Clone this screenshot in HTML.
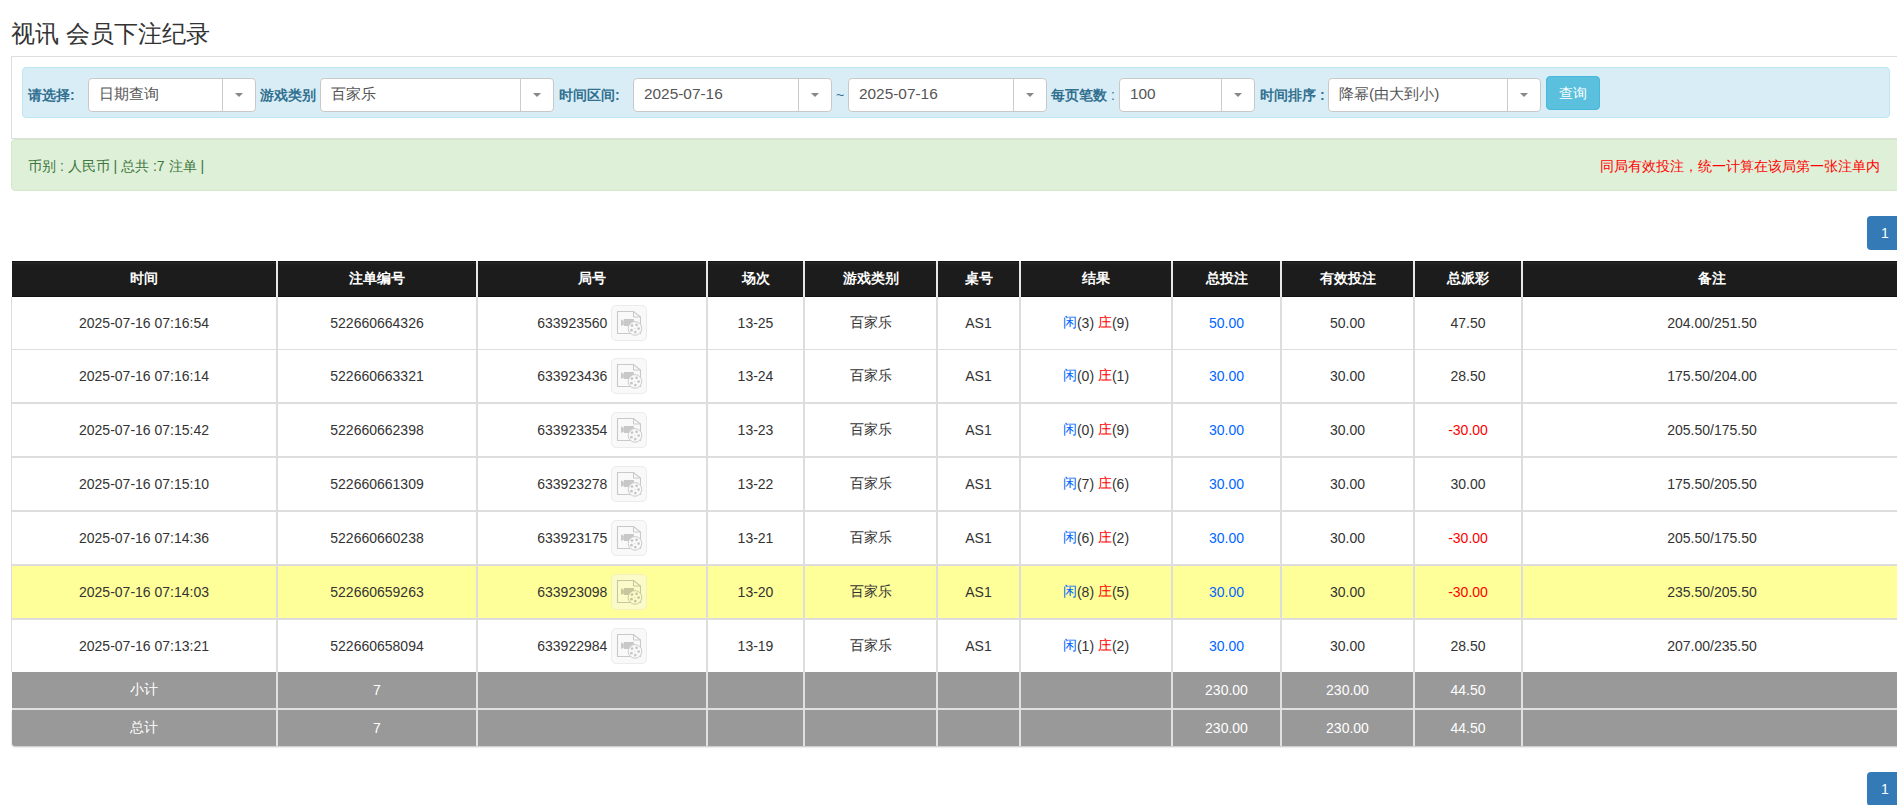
<!DOCTYPE html>
<html><head><meta charset="utf-8"><title>视讯 会员下注纪录</title>
<style>
*{box-sizing:border-box;margin:0;padding:0}
html,body{width:1897px;height:805px;overflow:hidden;background:#fff}
body{position:relative;font-family:"Liberation Sans",sans-serif;color:#333;font-size:14px}
.a{position:absolute}
.title{left:11px;top:16px;font-size:24px;line-height:36px;color:#333;white-space:nowrap}
.panel{left:11px;top:56px;width:1890px;height:83px;border:1px solid #ddd;background:#fff}
.info{left:22px;top:67px;width:1868px;height:51px;background:#d9edf7;border:1px solid #bce8f1;border-radius:4px}
.lbl{top:85px;font-size:14px;font-weight:bold;color:#31708f;line-height:20px;white-space:nowrap}
.sel{top:78px;height:34px;background:#fff;border:1px solid #c8c8c8;border-radius:4px;font-size:15.4px;color:#555;line-height:30px;padding-left:10px;white-space:nowrap}
.sel .dv{position:absolute;top:0;bottom:0;width:1px;background:#ccc}
.sel .ct{position:absolute;top:14px;width:0;height:0;border-left:4px solid transparent;border-right:4px solid transparent;border-top:4px solid #888}
.btn{left:1546px;top:76px;width:54px;height:34px;background:#5bc0de;border:1px solid #46b8da;border-radius:4px;color:#fff;font-size:14px;line-height:32px;text-align:center}
.succ{left:11px;top:139px;width:1890px;height:52px;background:#dff0d8;border:1px solid #d6e9c6;border-radius:4px}
.gtxt{left:28px;top:156px;color:#3c763d;font-size:14px;line-height:20px;white-space:nowrap}
.rtxt{left:1600px;top:155.5px;color:#f00;font-size:14px;line-height:20px;white-space:nowrap}
.pg{left:1867px;width:40px;height:34px;background:#337ab7;border-radius:4px;color:#fff;font-size:14px;line-height:34px;padding-left:14px;font-weight:normal}
.hdr{left:12px;top:261px;width:1889px;height:36px;background:linear-gradient(#141414 0,#141414 1px,#262626 1px,#202020 3px,#1c1c1c 4px,#1c1c1c 35px,#111 35px)}
.c{position:absolute;display:flex;align-items:center;justify-content:center;white-space:nowrap}
.in{display:flex;align-items:center;white-space:pre}
.h{color:#fff;font-weight:bold;font-size:14px}
.vl{position:absolute;width:2px}
.hl{position:absolute;left:12px;width:1889px;background:#ddd}
.yel{background:#ffff99}
.gray{position:absolute;left:12px;width:1889px;height:36px;background:#999}
.gb{border-radius:0 0 3px 3px;box-shadow:0 1px 2px rgba(0,0,0,.25)}
.w{color:#fff}
.bl{color:#0066ff}
.rd{color:#f00}
.vb{display:inline-block;width:36px;height:36px;margin-left:3.4px;top:-0.5px;border:1px solid #ececec;border-radius:5px;background:#f9f9f9;position:relative}
.vb svg{position:absolute;left:-1px;top:-1px}
.yel .vb{background:#fbfbc9;border-color:#f2f2b8}
</style></head><body>
<div class="a title">视讯 会员下注纪录</div>
<div class="a panel"></div>
<div class="a info"></div>

<div class="a lbl" style="left:28px">请选择:</div>
<div class="a sel" style="left:88px;width:168px">日期查询<span class="dv" style="left:133px"></span><span class="ct" style="left:146px"></span></div>
<div class="a sel" style="left:320px;width:234px">百家乐<span class="dv" style="left:199px"></span><span class="ct" style="left:212px"></span></div>
<div class="a sel" style="left:633px;width:199px">2025-07-16<span class="dv" style="left:164px"></span><span class="ct" style="left:177px"></span></div>
<div class="a sel" style="left:848px;width:199px">2025-07-16<span class="dv" style="left:164px"></span><span class="ct" style="left:177px"></span></div>
<div class="a sel" style="left:1119px;width:136px">100<span class="dv" style="left:101px"></span><span class="ct" style="left:114px"></span></div>
<div class="a sel" style="left:1328px;width:213px">降幂(由大到小)<span class="dv" style="left:178px"></span><span class="ct" style="left:191px"></span></div>
<div class="a lbl" style="left:260px">游戏类别</div>
<div class="a lbl" style="left:559px">时间区间:</div>
<div class="a" style="left:836px;top:85px;line-height:20px;color:#31708f;font-size:14px">~</div>
<div class="a lbl" style="left:1051px">每页笔数 <span style="font-weight:normal">:</span></div>
<div class="a lbl" style="left:1260px">时间排序 :</div>
<div class="a btn">查询</div>
<div class="a succ"></div>
<div class="a gtxt">币别 : 人民币 | 总共 :7 注单 |</div>
<div class="a rtxt">同局有效投注，统一计算在该局第一张注单内</div>
<div class="a pg" style="top:216px">1</div>
<div class="a pg" style="top:772px">1</div>
<div class="a hdr"></div>
<div class="c h" style="left:12px;top:261px;width:264px;height:36px;"><span class="in">时间</span></div>
<div class="c h" style="left:278px;top:261px;width:198px;height:36px;"><span class="in">注单编号</span></div>
<div class="c h" style="left:478px;top:261px;width:228px;height:36px;"><span class="in">局号</span></div>
<div class="c h" style="left:708px;top:261px;width:95px;height:36px;"><span class="in">场次</span></div>
<div class="c h" style="left:805px;top:261px;width:131px;height:36px;"><span class="in">游戏类别</span></div>
<div class="c h" style="left:938px;top:261px;width:81px;height:36px;"><span class="in">桌号</span></div>
<div class="c h" style="left:1021px;top:261px;width:150px;height:36px;"><span class="in">结果</span></div>
<div class="c h" style="left:1173px;top:261px;width:107px;height:36px;"><span class="in">总投注</span></div>
<div class="c h" style="left:1282px;top:261px;width:131px;height:36px;"><span class="in">有效投注</span></div>
<div class="c h" style="left:1415px;top:261px;width:106px;height:36px;"><span class="in">总派彩</span></div>
<div class="c h" style="left:1523px;top:261px;width:378px;height:36px;"><span class="in">备注</span></div>
<div class="a" style="left:11px;top:297px;width:1px;height:375px;background:#ddd"></div>
<div class="c" style="left:12px;top:297px;width:264px;height:52px;"><span class="in">2025-07-16 07:16:54</span></div>
<div class="c" style="left:278px;top:297px;width:198px;height:52px;"><span class="in">522660664326</span></div>
<div class="c" style="left:478px;top:297px;width:228px;height:52px;"><span class="in">633923560<span class="vb"><svg width="36" height="36" viewBox="0 0 36 36"><path d="M6.5 6.5H22.5L29.5 12V28.5H6.5Z" fill="none" stroke="#c9c9c9" stroke-width="1.1"/><path d="M22.5 6.5V12H29.5" fill="none" stroke="#c9c9c9" stroke-width="1"/><path d="M10 14.3L12.8 16V19.5L10 21Z" fill="#c8c8c8"/><rect x="12.8" y="14" width="10.1" height="7" fill="#c8c8c8"/><circle cx="24" cy="23.4" r="6.8" fill="#f9f9f9" stroke="#cccccc" stroke-width="1"/><circle cx="21" cy="20.6" r="1.35" fill="#c6c6c6"/><circle cx="25.6" cy="19.8" r="1.35" fill="#c6c6c6"/><circle cx="27.6" cy="23.6" r="1.35" fill="#c6c6c6"/><circle cx="24.3" cy="27.1" r="1.35" fill="#c6c6c6"/><circle cx="20.5" cy="25.2" r="1.35" fill="#c6c6c6"/><circle cx="23.9" cy="23.5" r="0.5" fill="#c8c8c8"/></svg></span></span></div>
<div class="c" style="left:708px;top:297px;width:95px;height:52px;"><span class="in">13-25</span></div>
<div class="c" style="left:805px;top:297px;width:131px;height:52px;"><span class="in">百家乐</span></div>
<div class="c" style="left:938px;top:297px;width:81px;height:52px;"><span class="in">AS1</span></div>
<div class="c" style="left:1021px;top:297px;width:150px;height:52px;"><span class="in"><span class="bl">闲</span>(3) <span class="rd">庄</span>(9)</span></div>
<div class="c" style="left:1173px;top:297px;width:107px;height:52px;"><span class="in"><span class="bl">50.00</span></span></div>
<div class="c" style="left:1282px;top:297px;width:131px;height:52px;"><span class="in">50.00</span></div>
<div class="c" style="left:1415px;top:297px;width:106px;height:52px;"><span class="in"><span class="">47.50</span></span></div>
<div class="c" style="left:1523px;top:297px;width:378px;height:52px;"><span class="in">204.00/251.50</span></div>
<div class="c" style="left:12px;top:350px;width:264px;height:52px;"><span class="in">2025-07-16 07:16:14</span></div>
<div class="c" style="left:278px;top:350px;width:198px;height:52px;"><span class="in">522660663321</span></div>
<div class="c" style="left:478px;top:350px;width:228px;height:52px;"><span class="in">633923436<span class="vb"><svg width="36" height="36" viewBox="0 0 36 36"><path d="M6.5 6.5H22.5L29.5 12V28.5H6.5Z" fill="none" stroke="#c9c9c9" stroke-width="1.1"/><path d="M22.5 6.5V12H29.5" fill="none" stroke="#c9c9c9" stroke-width="1"/><path d="M10 14.3L12.8 16V19.5L10 21Z" fill="#c8c8c8"/><rect x="12.8" y="14" width="10.1" height="7" fill="#c8c8c8"/><circle cx="24" cy="23.4" r="6.8" fill="#f9f9f9" stroke="#cccccc" stroke-width="1"/><circle cx="21" cy="20.6" r="1.35" fill="#c6c6c6"/><circle cx="25.6" cy="19.8" r="1.35" fill="#c6c6c6"/><circle cx="27.6" cy="23.6" r="1.35" fill="#c6c6c6"/><circle cx="24.3" cy="27.1" r="1.35" fill="#c6c6c6"/><circle cx="20.5" cy="25.2" r="1.35" fill="#c6c6c6"/><circle cx="23.9" cy="23.5" r="0.5" fill="#c8c8c8"/></svg></span></span></div>
<div class="c" style="left:708px;top:350px;width:95px;height:52px;"><span class="in">13-24</span></div>
<div class="c" style="left:805px;top:350px;width:131px;height:52px;"><span class="in">百家乐</span></div>
<div class="c" style="left:938px;top:350px;width:81px;height:52px;"><span class="in">AS1</span></div>
<div class="c" style="left:1021px;top:350px;width:150px;height:52px;"><span class="in"><span class="bl">闲</span>(0) <span class="rd">庄</span>(1)</span></div>
<div class="c" style="left:1173px;top:350px;width:107px;height:52px;"><span class="in"><span class="bl">30.00</span></span></div>
<div class="c" style="left:1282px;top:350px;width:131px;height:52px;"><span class="in">30.00</span></div>
<div class="c" style="left:1415px;top:350px;width:106px;height:52px;"><span class="in"><span class="">28.50</span></span></div>
<div class="c" style="left:1523px;top:350px;width:378px;height:52px;"><span class="in">175.50/204.00</span></div>
<div class="c" style="left:12px;top:404px;width:264px;height:52px;"><span class="in">2025-07-16 07:15:42</span></div>
<div class="c" style="left:278px;top:404px;width:198px;height:52px;"><span class="in">522660662398</span></div>
<div class="c" style="left:478px;top:404px;width:228px;height:52px;"><span class="in">633923354<span class="vb"><svg width="36" height="36" viewBox="0 0 36 36"><path d="M6.5 6.5H22.5L29.5 12V28.5H6.5Z" fill="none" stroke="#c9c9c9" stroke-width="1.1"/><path d="M22.5 6.5V12H29.5" fill="none" stroke="#c9c9c9" stroke-width="1"/><path d="M10 14.3L12.8 16V19.5L10 21Z" fill="#c8c8c8"/><rect x="12.8" y="14" width="10.1" height="7" fill="#c8c8c8"/><circle cx="24" cy="23.4" r="6.8" fill="#f9f9f9" stroke="#cccccc" stroke-width="1"/><circle cx="21" cy="20.6" r="1.35" fill="#c6c6c6"/><circle cx="25.6" cy="19.8" r="1.35" fill="#c6c6c6"/><circle cx="27.6" cy="23.6" r="1.35" fill="#c6c6c6"/><circle cx="24.3" cy="27.1" r="1.35" fill="#c6c6c6"/><circle cx="20.5" cy="25.2" r="1.35" fill="#c6c6c6"/><circle cx="23.9" cy="23.5" r="0.5" fill="#c8c8c8"/></svg></span></span></div>
<div class="c" style="left:708px;top:404px;width:95px;height:52px;"><span class="in">13-23</span></div>
<div class="c" style="left:805px;top:404px;width:131px;height:52px;"><span class="in">百家乐</span></div>
<div class="c" style="left:938px;top:404px;width:81px;height:52px;"><span class="in">AS1</span></div>
<div class="c" style="left:1021px;top:404px;width:150px;height:52px;"><span class="in"><span class="bl">闲</span>(0) <span class="rd">庄</span>(9)</span></div>
<div class="c" style="left:1173px;top:404px;width:107px;height:52px;"><span class="in"><span class="bl">30.00</span></span></div>
<div class="c" style="left:1282px;top:404px;width:131px;height:52px;"><span class="in">30.00</span></div>
<div class="c" style="left:1415px;top:404px;width:106px;height:52px;"><span class="in"><span class="rd">-30.00</span></span></div>
<div class="c" style="left:1523px;top:404px;width:378px;height:52px;"><span class="in">205.50/175.50</span></div>
<div class="c" style="left:12px;top:458px;width:264px;height:52px;"><span class="in">2025-07-16 07:15:10</span></div>
<div class="c" style="left:278px;top:458px;width:198px;height:52px;"><span class="in">522660661309</span></div>
<div class="c" style="left:478px;top:458px;width:228px;height:52px;"><span class="in">633923278<span class="vb"><svg width="36" height="36" viewBox="0 0 36 36"><path d="M6.5 6.5H22.5L29.5 12V28.5H6.5Z" fill="none" stroke="#c9c9c9" stroke-width="1.1"/><path d="M22.5 6.5V12H29.5" fill="none" stroke="#c9c9c9" stroke-width="1"/><path d="M10 14.3L12.8 16V19.5L10 21Z" fill="#c8c8c8"/><rect x="12.8" y="14" width="10.1" height="7" fill="#c8c8c8"/><circle cx="24" cy="23.4" r="6.8" fill="#f9f9f9" stroke="#cccccc" stroke-width="1"/><circle cx="21" cy="20.6" r="1.35" fill="#c6c6c6"/><circle cx="25.6" cy="19.8" r="1.35" fill="#c6c6c6"/><circle cx="27.6" cy="23.6" r="1.35" fill="#c6c6c6"/><circle cx="24.3" cy="27.1" r="1.35" fill="#c6c6c6"/><circle cx="20.5" cy="25.2" r="1.35" fill="#c6c6c6"/><circle cx="23.9" cy="23.5" r="0.5" fill="#c8c8c8"/></svg></span></span></div>
<div class="c" style="left:708px;top:458px;width:95px;height:52px;"><span class="in">13-22</span></div>
<div class="c" style="left:805px;top:458px;width:131px;height:52px;"><span class="in">百家乐</span></div>
<div class="c" style="left:938px;top:458px;width:81px;height:52px;"><span class="in">AS1</span></div>
<div class="c" style="left:1021px;top:458px;width:150px;height:52px;"><span class="in"><span class="bl">闲</span>(7) <span class="rd">庄</span>(6)</span></div>
<div class="c" style="left:1173px;top:458px;width:107px;height:52px;"><span class="in"><span class="bl">30.00</span></span></div>
<div class="c" style="left:1282px;top:458px;width:131px;height:52px;"><span class="in">30.00</span></div>
<div class="c" style="left:1415px;top:458px;width:106px;height:52px;"><span class="in"><span class="">30.00</span></span></div>
<div class="c" style="left:1523px;top:458px;width:378px;height:52px;"><span class="in">175.50/205.50</span></div>
<div class="c" style="left:12px;top:512px;width:264px;height:52px;"><span class="in">2025-07-16 07:14:36</span></div>
<div class="c" style="left:278px;top:512px;width:198px;height:52px;"><span class="in">522660660238</span></div>
<div class="c" style="left:478px;top:512px;width:228px;height:52px;"><span class="in">633923175<span class="vb"><svg width="36" height="36" viewBox="0 0 36 36"><path d="M6.5 6.5H22.5L29.5 12V28.5H6.5Z" fill="none" stroke="#c9c9c9" stroke-width="1.1"/><path d="M22.5 6.5V12H29.5" fill="none" stroke="#c9c9c9" stroke-width="1"/><path d="M10 14.3L12.8 16V19.5L10 21Z" fill="#c8c8c8"/><rect x="12.8" y="14" width="10.1" height="7" fill="#c8c8c8"/><circle cx="24" cy="23.4" r="6.8" fill="#f9f9f9" stroke="#cccccc" stroke-width="1"/><circle cx="21" cy="20.6" r="1.35" fill="#c6c6c6"/><circle cx="25.6" cy="19.8" r="1.35" fill="#c6c6c6"/><circle cx="27.6" cy="23.6" r="1.35" fill="#c6c6c6"/><circle cx="24.3" cy="27.1" r="1.35" fill="#c6c6c6"/><circle cx="20.5" cy="25.2" r="1.35" fill="#c6c6c6"/><circle cx="23.9" cy="23.5" r="0.5" fill="#c8c8c8"/></svg></span></span></div>
<div class="c" style="left:708px;top:512px;width:95px;height:52px;"><span class="in">13-21</span></div>
<div class="c" style="left:805px;top:512px;width:131px;height:52px;"><span class="in">百家乐</span></div>
<div class="c" style="left:938px;top:512px;width:81px;height:52px;"><span class="in">AS1</span></div>
<div class="c" style="left:1021px;top:512px;width:150px;height:52px;"><span class="in"><span class="bl">闲</span>(6) <span class="rd">庄</span>(2)</span></div>
<div class="c" style="left:1173px;top:512px;width:107px;height:52px;"><span class="in"><span class="bl">30.00</span></span></div>
<div class="c" style="left:1282px;top:512px;width:131px;height:52px;"><span class="in">30.00</span></div>
<div class="c" style="left:1415px;top:512px;width:106px;height:52px;"><span class="in"><span class="rd">-30.00</span></span></div>
<div class="c" style="left:1523px;top:512px;width:378px;height:52px;"><span class="in">205.50/175.50</span></div>
<div class="a yel" style="left:12px;top:566px;width:1889px;height:52px"></div>
<div class="c yel" style="left:12px;top:566px;width:264px;height:52px;"><span class="in">2025-07-16 07:14:03</span></div>
<div class="c yel" style="left:278px;top:566px;width:198px;height:52px;"><span class="in">522660659263</span></div>
<div class="c yel" style="left:478px;top:566px;width:228px;height:52px;"><span class="in">633923098<span class="vb"><svg width="36" height="36" viewBox="0 0 36 36"><path d="M6.5 6.5H22.5L29.5 12V28.5H6.5Z" fill="none" stroke="#c6c69f" stroke-width="1.1"/><path d="M22.5 6.5V12H29.5" fill="none" stroke="#c6c69f" stroke-width="1"/><path d="M10 14.3L12.8 16V19.5L10 21Z" fill="#c5c59e"/><rect x="12.8" y="14" width="10.1" height="7" fill="#c5c59e"/><circle cx="24" cy="23.4" r="6.8" fill="#fbfbc9" stroke="#c9c9a1" stroke-width="1"/><circle cx="21" cy="20.6" r="1.35" fill="#c3c39c"/><circle cx="25.6" cy="19.8" r="1.35" fill="#c3c39c"/><circle cx="27.6" cy="23.6" r="1.35" fill="#c3c39c"/><circle cx="24.3" cy="27.1" r="1.35" fill="#c3c39c"/><circle cx="20.5" cy="25.2" r="1.35" fill="#c3c39c"/><circle cx="23.9" cy="23.5" r="0.5" fill="#c5c59e"/></svg></span></span></div>
<div class="c yel" style="left:708px;top:566px;width:95px;height:52px;"><span class="in">13-20</span></div>
<div class="c yel" style="left:805px;top:566px;width:131px;height:52px;"><span class="in">百家乐</span></div>
<div class="c yel" style="left:938px;top:566px;width:81px;height:52px;"><span class="in">AS1</span></div>
<div class="c yel" style="left:1021px;top:566px;width:150px;height:52px;"><span class="in"><span class="bl">闲</span>(8) <span class="rd">庄</span>(5)</span></div>
<div class="c yel" style="left:1173px;top:566px;width:107px;height:52px;"><span class="in"><span class="bl">30.00</span></span></div>
<div class="c yel" style="left:1282px;top:566px;width:131px;height:52px;"><span class="in">30.00</span></div>
<div class="c yel" style="left:1415px;top:566px;width:106px;height:52px;"><span class="in"><span class="rd">-30.00</span></span></div>
<div class="c yel" style="left:1523px;top:566px;width:378px;height:52px;"><span class="in">235.50/205.50</span></div>
<div class="c" style="left:12px;top:620px;width:264px;height:52px;"><span class="in">2025-07-16 07:13:21</span></div>
<div class="c" style="left:278px;top:620px;width:198px;height:52px;"><span class="in">522660658094</span></div>
<div class="c" style="left:478px;top:620px;width:228px;height:52px;"><span class="in">633922984<span class="vb"><svg width="36" height="36" viewBox="0 0 36 36"><path d="M6.5 6.5H22.5L29.5 12V28.5H6.5Z" fill="none" stroke="#c9c9c9" stroke-width="1.1"/><path d="M22.5 6.5V12H29.5" fill="none" stroke="#c9c9c9" stroke-width="1"/><path d="M10 14.3L12.8 16V19.5L10 21Z" fill="#c8c8c8"/><rect x="12.8" y="14" width="10.1" height="7" fill="#c8c8c8"/><circle cx="24" cy="23.4" r="6.8" fill="#f9f9f9" stroke="#cccccc" stroke-width="1"/><circle cx="21" cy="20.6" r="1.35" fill="#c6c6c6"/><circle cx="25.6" cy="19.8" r="1.35" fill="#c6c6c6"/><circle cx="27.6" cy="23.6" r="1.35" fill="#c6c6c6"/><circle cx="24.3" cy="27.1" r="1.35" fill="#c6c6c6"/><circle cx="20.5" cy="25.2" r="1.35" fill="#c6c6c6"/><circle cx="23.9" cy="23.5" r="0.5" fill="#c8c8c8"/></svg></span></span></div>
<div class="c" style="left:708px;top:620px;width:95px;height:52px;"><span class="in">13-19</span></div>
<div class="c" style="left:805px;top:620px;width:131px;height:52px;"><span class="in">百家乐</span></div>
<div class="c" style="left:938px;top:620px;width:81px;height:52px;"><span class="in">AS1</span></div>
<div class="c" style="left:1021px;top:620px;width:150px;height:52px;"><span class="in"><span class="bl">闲</span>(1) <span class="rd">庄</span>(2)</span></div>
<div class="c" style="left:1173px;top:620px;width:107px;height:52px;"><span class="in"><span class="bl">30.00</span></span></div>
<div class="c" style="left:1282px;top:620px;width:131px;height:52px;"><span class="in">30.00</span></div>
<div class="c" style="left:1415px;top:620px;width:106px;height:52px;"><span class="in"><span class="">28.50</span></span></div>
<div class="c" style="left:1523px;top:620px;width:378px;height:52px;"><span class="in">207.00/235.50</span></div>
<div class="hl" style="top:349px;height:1px"></div>
<div class="hl" style="top:402px;height:2px"></div>
<div class="hl" style="top:456px;height:2px"></div>
<div class="hl" style="top:510px;height:2px"></div>
<div class="hl" style="top:564px;height:2px"></div>
<div class="hl" style="top:618px;height:2px"></div>
<div class="gray" style="top:672px"></div>
<div class="c w" style="left:12px;top:672px;width:264px;height:36px;"><span class="in">小计</span></div>
<div class="c w" style="left:278px;top:672px;width:198px;height:36px;"><span class="in">7</span></div>
<div class="c w" style="left:478px;top:672px;width:228px;height:36px;"><span class="in"></span></div>
<div class="c w" style="left:708px;top:672px;width:95px;height:36px;"><span class="in"></span></div>
<div class="c w" style="left:805px;top:672px;width:131px;height:36px;"><span class="in"></span></div>
<div class="c w" style="left:938px;top:672px;width:81px;height:36px;"><span class="in"></span></div>
<div class="c w" style="left:1021px;top:672px;width:150px;height:36px;"><span class="in"></span></div>
<div class="c w" style="left:1173px;top:672px;width:107px;height:36px;"><span class="in">230.00</span></div>
<div class="c w" style="left:1282px;top:672px;width:131px;height:36px;"><span class="in">230.00</span></div>
<div class="c w" style="left:1415px;top:672px;width:106px;height:36px;"><span class="in">44.50</span></div>
<div class="c w" style="left:1523px;top:672px;width:378px;height:36px;"><span class="in"></span></div>
<div class="gray gb" style="top:710px"></div>
<div class="c w" style="left:12px;top:710px;width:264px;height:36px;"><span class="in">总计</span></div>
<div class="c w" style="left:278px;top:710px;width:198px;height:36px;"><span class="in">7</span></div>
<div class="c w" style="left:478px;top:710px;width:228px;height:36px;"><span class="in"></span></div>
<div class="c w" style="left:708px;top:710px;width:95px;height:36px;"><span class="in"></span></div>
<div class="c w" style="left:805px;top:710px;width:131px;height:36px;"><span class="in"></span></div>
<div class="c w" style="left:938px;top:710px;width:81px;height:36px;"><span class="in"></span></div>
<div class="c w" style="left:1021px;top:710px;width:150px;height:36px;"><span class="in"></span></div>
<div class="c w" style="left:1173px;top:710px;width:107px;height:36px;"><span class="in">230.00</span></div>
<div class="c w" style="left:1282px;top:710px;width:131px;height:36px;"><span class="in">230.00</span></div>
<div class="c w" style="left:1415px;top:710px;width:106px;height:36px;"><span class="in">44.50</span></div>
<div class="c w" style="left:1523px;top:710px;width:378px;height:36px;"><span class="in"></span></div>
<div class="a" style="left:12px;top:708px;width:1889px;height:2px;background:#e0e0e0"></div>
<div class="vl" style="left:276px;top:261px;height:36px;background:#e8e8e8"></div>
<div class="vl" style="left:276px;top:297px;height:375px;background:#ddd"></div>
<div class="vl" style="left:276px;top:672px;height:74px;background:#e0e0e0"></div>
<div class="vl" style="left:476px;top:261px;height:36px;background:#e8e8e8"></div>
<div class="vl" style="left:476px;top:297px;height:375px;background:#ddd"></div>
<div class="vl" style="left:476px;top:672px;height:74px;background:#e0e0e0"></div>
<div class="vl" style="left:706px;top:261px;height:36px;background:#e8e8e8"></div>
<div class="vl" style="left:706px;top:297px;height:375px;background:#ddd"></div>
<div class="vl" style="left:706px;top:672px;height:74px;background:#e0e0e0"></div>
<div class="vl" style="left:803px;top:261px;height:36px;background:#e8e8e8"></div>
<div class="vl" style="left:803px;top:297px;height:375px;background:#ddd"></div>
<div class="vl" style="left:803px;top:672px;height:74px;background:#e0e0e0"></div>
<div class="vl" style="left:936px;top:261px;height:36px;background:#e8e8e8"></div>
<div class="vl" style="left:936px;top:297px;height:375px;background:#ddd"></div>
<div class="vl" style="left:936px;top:672px;height:74px;background:#e0e0e0"></div>
<div class="vl" style="left:1019px;top:261px;height:36px;background:#e8e8e8"></div>
<div class="vl" style="left:1019px;top:297px;height:375px;background:#ddd"></div>
<div class="vl" style="left:1019px;top:672px;height:74px;background:#e0e0e0"></div>
<div class="vl" style="left:1171px;top:261px;height:36px;background:#e8e8e8"></div>
<div class="vl" style="left:1171px;top:297px;height:375px;background:#ddd"></div>
<div class="vl" style="left:1171px;top:672px;height:74px;background:#e0e0e0"></div>
<div class="vl" style="left:1280px;top:261px;height:36px;background:#e8e8e8"></div>
<div class="vl" style="left:1280px;top:297px;height:375px;background:#ddd"></div>
<div class="vl" style="left:1280px;top:672px;height:74px;background:#e0e0e0"></div>
<div class="vl" style="left:1413px;top:261px;height:36px;background:#e8e8e8"></div>
<div class="vl" style="left:1413px;top:297px;height:375px;background:#ddd"></div>
<div class="vl" style="left:1413px;top:672px;height:74px;background:#e0e0e0"></div>
<div class="vl" style="left:1521px;top:261px;height:36px;background:#e8e8e8"></div>
<div class="vl" style="left:1521px;top:297px;height:375px;background:#ddd"></div>
<div class="vl" style="left:1521px;top:672px;height:74px;background:#e0e0e0"></div>
</body></html>
